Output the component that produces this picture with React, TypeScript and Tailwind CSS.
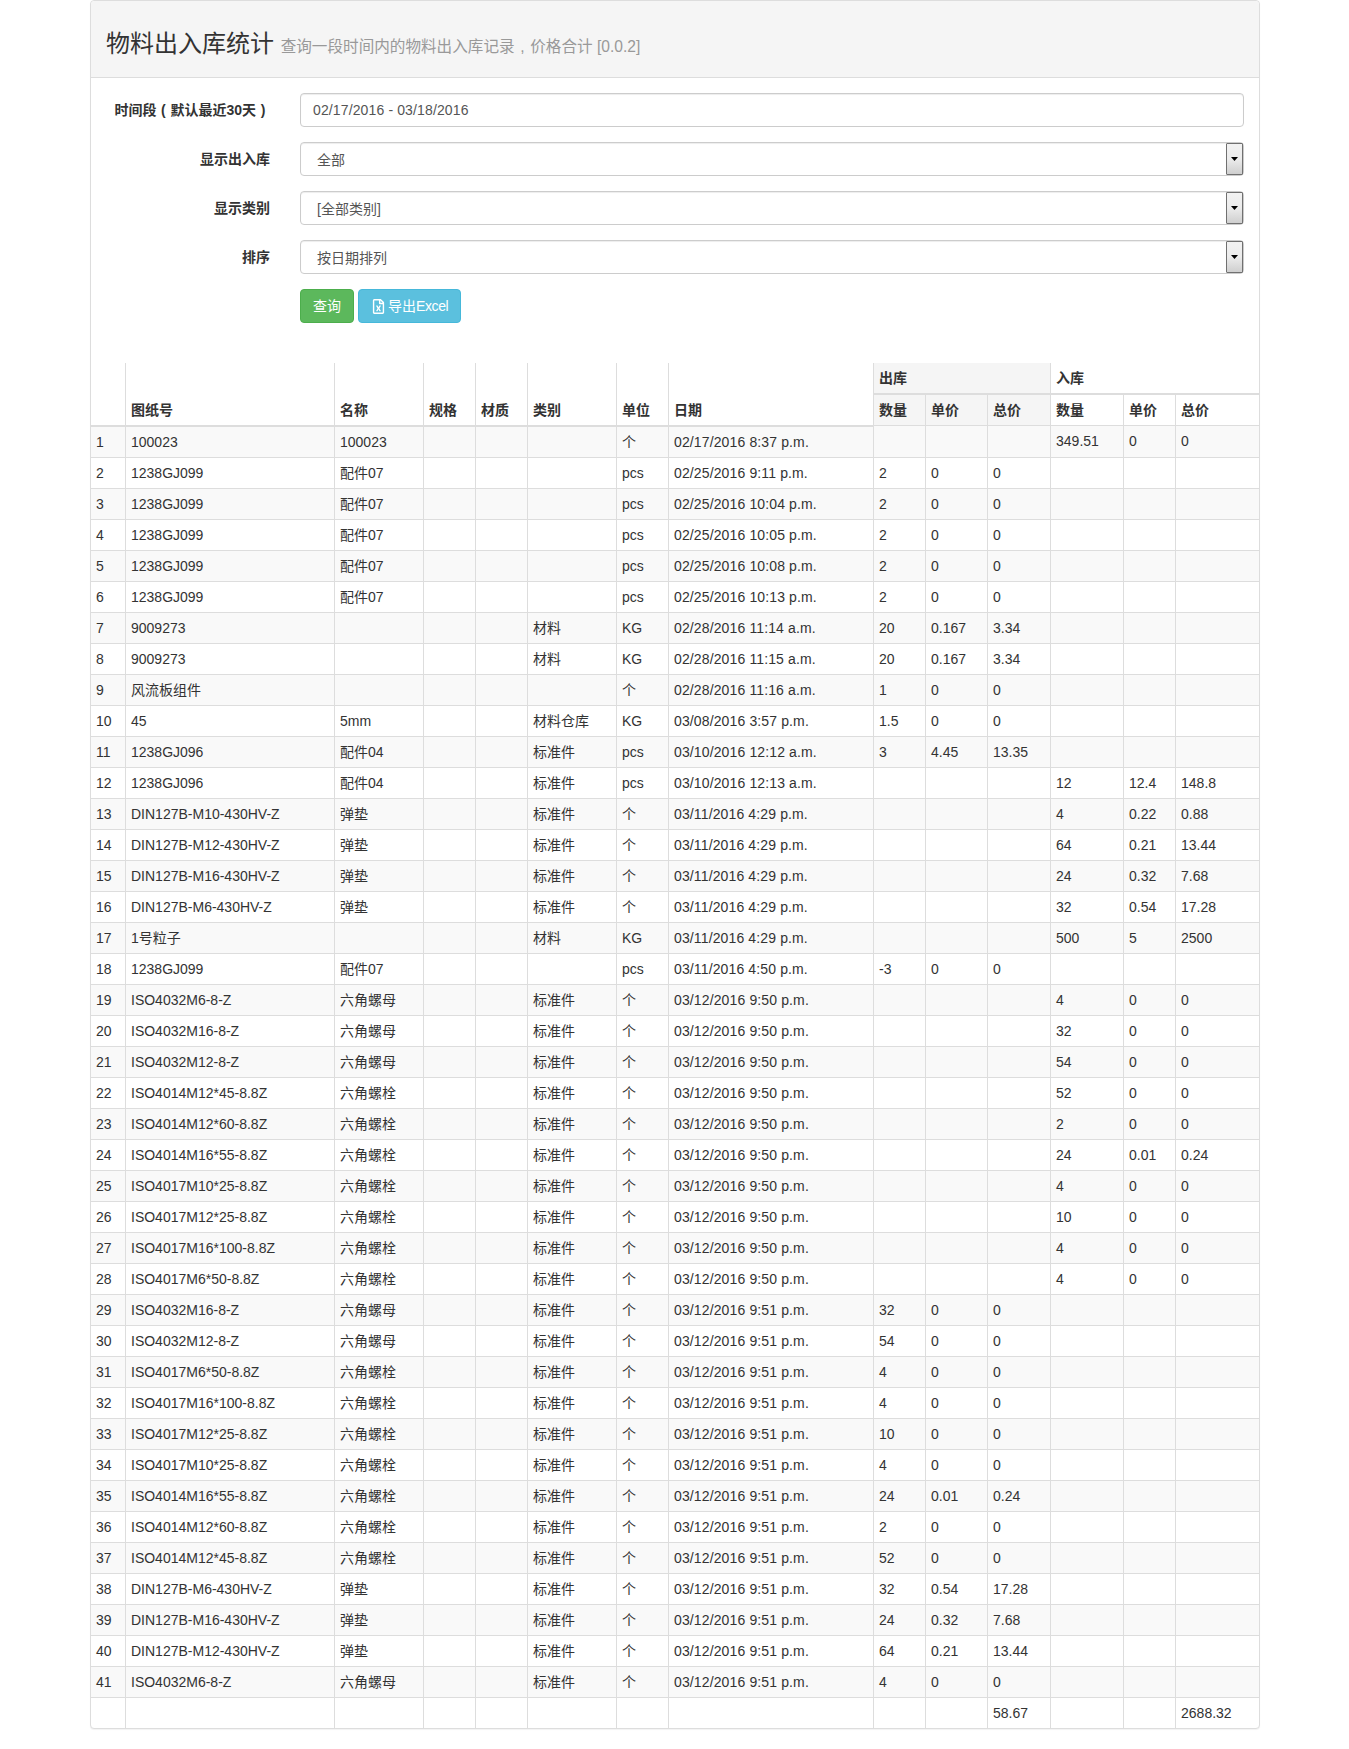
import React from "react";
import { FaRegFileExcel } from "react-icons/fa";

const cols = ["w-[34px]", "w-[209px]", "w-[89px]", "w-[52px]", "w-[52px]", "w-[89px]", "w-[52px]", "w-[205px]", "w-[52px]", "w-[62px]", "w-[63px]", "w-[73px]", "w-[52px]", "w-[84px]"];

// no, drawing, name, category, unit, date, outQty, outPrice, outTotal, inQty, inPrice, inTotal
const rows: string[][] = [
  ["100023", "100023", "", "个", "02/17/2016 8:37 p.m.", "", "", "", "349.51", "0", "0"],
  ["1238GJ099", "配件07", "", "pcs", "02/25/2016 9:11 p.m.", "2", "0", "0", "", "", ""],
  ["1238GJ099", "配件07", "", "pcs", "02/25/2016 10:04 p.m.", "2", "0", "0", "", "", ""],
  ["1238GJ099", "配件07", "", "pcs", "02/25/2016 10:05 p.m.", "2", "0", "0", "", "", ""],
  ["1238GJ099", "配件07", "", "pcs", "02/25/2016 10:08 p.m.", "2", "0", "0", "", "", ""],
  ["1238GJ099", "配件07", "", "pcs", "02/25/2016 10:13 p.m.", "2", "0", "0", "", "", ""],
  ["9009273", "", "材料", "KG", "02/28/2016 11:14 a.m.", "20", "0.167", "3.34", "", "", ""],
  ["9009273", "", "材料", "KG", "02/28/2016 11:15 a.m.", "20", "0.167", "3.34", "", "", ""],
  ["风流板组件", "", "", "个", "02/28/2016 11:16 a.m.", "1", "0", "0", "", "", ""],
  ["45", "5mm", "材料仓库", "KG", "03/08/2016 3:57 p.m.", "1.5", "0", "0", "", "", ""],
  ["1238GJ096", "配件04", "标准件", "pcs", "03/10/2016 12:12 a.m.", "3", "4.45", "13.35", "", "", ""],
  ["1238GJ096", "配件04", "标准件", "pcs", "03/10/2016 12:13 a.m.", "", "", "", "12", "12.4", "148.8"],
  ["DIN127B-M10-430HV-Z", "弹垫", "标准件", "个", "03/11/2016 4:29 p.m.", "", "", "", "4", "0.22", "0.88"],
  ["DIN127B-M12-430HV-Z", "弹垫", "标准件", "个", "03/11/2016 4:29 p.m.", "", "", "", "64", "0.21", "13.44"],
  ["DIN127B-M16-430HV-Z", "弹垫", "标准件", "个", "03/11/2016 4:29 p.m.", "", "", "", "24", "0.32", "7.68"],
  ["DIN127B-M6-430HV-Z", "弹垫", "标准件", "个", "03/11/2016 4:29 p.m.", "", "", "", "32", "0.54", "17.28"],
  ["1号粒子", "", "材料", "KG", "03/11/2016 4:29 p.m.", "", "", "", "500", "5", "2500"],
  ["1238GJ099", "配件07", "", "pcs", "03/11/2016 4:50 p.m.", "-3", "0", "0", "", "", ""],
  ["ISO4032M6-8-Z", "六角螺母", "标准件", "个", "03/12/2016 9:50 p.m.", "", "", "", "4", "0", "0"],
  ["ISO4032M16-8-Z", "六角螺母", "标准件", "个", "03/12/2016 9:50 p.m.", "", "", "", "32", "0", "0"],
  ["ISO4032M12-8-Z", "六角螺母", "标准件", "个", "03/12/2016 9:50 p.m.", "", "", "", "54", "0", "0"],
  ["ISO4014M12*45-8.8Z", "六角螺栓", "标准件", "个", "03/12/2016 9:50 p.m.", "", "", "", "52", "0", "0"],
  ["ISO4014M12*60-8.8Z", "六角螺栓", "标准件", "个", "03/12/2016 9:50 p.m.", "", "", "", "2", "0", "0"],
  ["ISO4014M16*55-8.8Z", "六角螺栓", "标准件", "个", "03/12/2016 9:50 p.m.", "", "", "", "24", "0.01", "0.24"],
  ["ISO4017M10*25-8.8Z", "六角螺栓", "标准件", "个", "03/12/2016 9:50 p.m.", "", "", "", "4", "0", "0"],
  ["ISO4017M12*25-8.8Z", "六角螺栓", "标准件", "个", "03/12/2016 9:50 p.m.", "", "", "", "10", "0", "0"],
  ["ISO4017M16*100-8.8Z", "六角螺栓", "标准件", "个", "03/12/2016 9:50 p.m.", "", "", "", "4", "0", "0"],
  ["ISO4017M6*50-8.8Z", "六角螺栓", "标准件", "个", "03/12/2016 9:50 p.m.", "", "", "", "4", "0", "0"],
  ["ISO4032M16-8-Z", "六角螺母", "标准件", "个", "03/12/2016 9:51 p.m.", "32", "0", "0", "", "", ""],
  ["ISO4032M12-8-Z", "六角螺母", "标准件", "个", "03/12/2016 9:51 p.m.", "54", "0", "0", "", "", ""],
  ["ISO4017M6*50-8.8Z", "六角螺栓", "标准件", "个", "03/12/2016 9:51 p.m.", "4", "0", "0", "", "", ""],
  ["ISO4017M16*100-8.8Z", "六角螺栓", "标准件", "个", "03/12/2016 9:51 p.m.", "4", "0", "0", "", "", ""],
  ["ISO4017M12*25-8.8Z", "六角螺栓", "标准件", "个", "03/12/2016 9:51 p.m.", "10", "0", "0", "", "", ""],
  ["ISO4017M10*25-8.8Z", "六角螺栓", "标准件", "个", "03/12/2016 9:51 p.m.", "4", "0", "0", "", "", ""],
  ["ISO4014M16*55-8.8Z", "六角螺栓", "标准件", "个", "03/12/2016 9:51 p.m.", "24", "0.01", "0.24", "", "", ""],
  ["ISO4014M12*60-8.8Z", "六角螺栓", "标准件", "个", "03/12/2016 9:51 p.m.", "2", "0", "0", "", "", ""],
  ["ISO4014M12*45-8.8Z", "六角螺栓", "标准件", "个", "03/12/2016 9:51 p.m.", "52", "0", "0", "", "", ""],
  ["DIN127B-M6-430HV-Z", "弹垫", "标准件", "个", "03/12/2016 9:51 p.m.", "32", "0.54", "17.28", "", "", ""],
  ["DIN127B-M16-430HV-Z", "弹垫", "标准件", "个", "03/12/2016 9:51 p.m.", "24", "0.32", "7.68", "", "", ""],
  ["DIN127B-M12-430HV-Z", "弹垫", "标准件", "个", "03/12/2016 9:51 p.m.", "64", "0.21", "13.44", "", "", ""],
  ["ISO4032M6-8-Z", "六角螺母", "标准件", "个", "03/12/2016 9:51 p.m.", "4", "0", "0", "", "", ""],
];

const thBase = "border border-[#ddd] border-t-0 py-[5px] pl-[5.5px] pr-[5px] text-left align-bottom font-bold";
const tdBase = "border border-[#ddd] py-[5px] pl-[5.5px] pr-[5px] align-top first:pl-[5px] first:border-l-0 last:border-r-0";

function FormRow({ label, children }: { label: React.ReactNode; children: React.ReactNode }) {
  return (
    <div className="flex mb-[15px]">
      <label className="w-[194px] shrink-0 pr-[30px] pt-[7px] text-right font-bold whitespace-nowrap">{label}</label>
      <div className="w-[944px]">{children}</div>
    </div>
  );
}

function SelectBox({ value }: { value: string }) {
  return (
    <div className="relative h-[34px] rounded border border-[#ccc] bg-white pl-[16px] pt-[7px] text-[#555] shadow-[inset_0_1px_1px_rgba(0,0,0,0.075)]">
      {value}
      <div className="absolute right-0 top-0 bottom-0 w-[17px] flex items-center justify-center rounded-[1px] border border-[#707070] bg-gradient-to-b from-[#f2f2f2] via-[#ececec] to-[#cfcfcf]">
        <svg width="7" height="4" viewBox="0 0 7 4"><path d="M0 0h7L3.5 4z" fill="#000" /></svg>
      </div>
    </div>
  );
}

export default function App() {
  return (
    <div className="min-h-[1749px] bg-white text-sm leading-5 text-[#333] font-['Liberation_Sans','Noto_Sans_CJK_SC',sans-serif]">
      <div className="w-[1170px] ml-[90px] rounded border border-[#ddd] bg-white shadow-[0_1px_1px_rgba(0,0,0,0.05)]">
        <div className="h-[77px] border-b border-[#ddd] bg-[#f5f5f5] rounded-t px-[15px] pt-[30px]">
          <h3 className="text-2xl leading-[26px] font-normal">
            物料出入库统计 <small className="text-[15.6px] font-normal text-[#999]">查询一段时间内的物料出入库记录<span className="inline-block w-[15.6px] text-center">,</span>价格合计 [0.0.2]</small>
          </h3>
        </div>
        <div className="pt-[15px] pl-[15px] pr-[15px]">
          <FormRow label={<>时间段<span className="inline-block w-[14px] text-center">(</span>默认最近30天<span className="inline-block w-[14px] text-center">)</span></>}>
            <div className="h-[34px] rounded border border-[#ccc] px-3 pt-[6px] text-[#555] tracking-[0.13px] shadow-[inset_0_1px_1px_rgba(0,0,0,0.075)]">02/17/2016 - 03/18/2016</div>
          </FormRow>
          <FormRow label="显示出入库"><SelectBox value="全部" /></FormRow>
          <FormRow label="显示类别"><SelectBox value="[全部类别]" /></FormRow>
          <FormRow label="排序"><SelectBox value="按日期排列" /></FormRow>
          <div className="flex gap-1 pl-[194px]">
            <button className="h-[34px] rounded border border-[#4cae4c] bg-[#5cb85c] px-3 text-white">查询</button>
            <button className="flex h-[34px] items-center gap-[2px] rounded border border-[#46b8da] bg-[#5bc0de] px-3 text-white">
              <FaRegFileExcel className="text-[15px]" />
              <span>导出<span className="tracking-[-0.4px]">Excel</span></span>
            </button>
          </div>
        </div>
        <table className="mt-[40px] w-[1168px] table-fixed">
          <colgroup>
            {cols.map((c, i) => <col key={i} className={c} />)}
          </colgroup>
          <thead>
            <tr className="h-[30px]">
              <th colSpan={1} rowSpan={2} className={`${thBase} border-l-0 border-b-2`}></th>
              <th rowSpan={2} className={`${thBase} border-b-2`}>图纸号</th>
              <th rowSpan={2} className={`${thBase} border-b-2`}>名称</th>
              <th rowSpan={2} className={`${thBase} border-b-2`}>规格</th>
              <th rowSpan={2} className={`${thBase} border-b-2`}>材质</th>
              <th rowSpan={2} className={`${thBase} border-b-2`}>类别</th>
              <th rowSpan={2} className={`${thBase} border-b-2`}>单位</th>
              <th rowSpan={2} className={`${thBase} border-b-2`}>日期</th>
              <th colSpan={3} className={`${thBase} border-b-2 bg-[#f5f5f5]`}>出库</th>
              <th colSpan={3} className={`${thBase} border-b-2 border-r-0`}>入库</th>
            </tr>
            <tr className="h-[31px]">
              <th className={`${thBase} bg-[#f5f5f5]`}>数量</th>
              <th className={`${thBase} bg-[#f5f5f5]`}>单价</th>
              <th className={`${thBase} bg-[#f5f5f5]`}>总价</th>
              <th className={thBase}>数量</th>
              <th className={thBase}>单价</th>
              <th className={`${thBase} border-r-0`}>总价</th>
            </tr>
          </thead>
          <tbody>
            {rows.map((r, i) => (
              <tr key={i} className={`h-[31px] ${i % 2 === 0 ? "bg-[#f9f9f9]" : ""}`}>
                <td className={tdBase}>{i + 1}</td>
                <td className={tdBase}>{r[0]}</td>
                <td className={tdBase}>{r[1]}</td>
                <td className={tdBase}></td>
                <td className={tdBase}></td>
                <td className={tdBase}>{r[2]}</td>
                <td className={tdBase}>{r[3]}</td>
                <td className={`${tdBase} tracking-[0.13px]`}>{r[4]}</td>
                <td className={tdBase}>{r[5]}</td>
                <td className={tdBase}>{r[6]}</td>
                <td className={tdBase}>{r[7]}</td>
                <td className={tdBase}>{r[8]}</td>
                <td className={tdBase}>{r[9]}</td>
                <td className={tdBase}>{r[10]}</td>
              </tr>
            ))}
            <tr className="h-[31px]">
              {Array.from({ length: 14 }).map((_, i) => (
                <td key={i} className={`${tdBase} border-b-0`}>{i === 10 ? "58.67" : i === 13 ? "2688.32" : ""}</td>
              ))}
            </tr>
          </tbody>
        </table>
      </div>
    </div>
  );
}
